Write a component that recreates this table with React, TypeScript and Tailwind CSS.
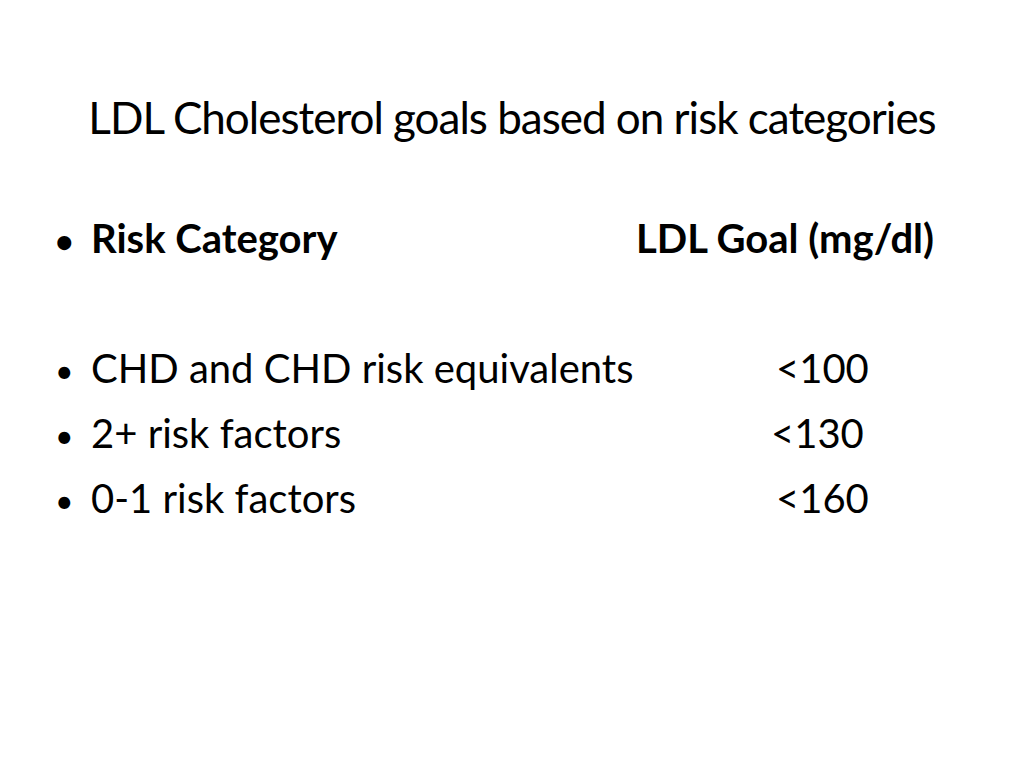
const rows = [
  { label: 'CHD and CHD risk equivalents', goal: '<100', width: 'w-[685px]' },
  { label: '2+ risk factors', goal: '<130', width: 'w-[680px]' },
  { label: '0-1 risk factors', goal: '<160', width: 'w-[685px]' },
];

export default function App() {
  return (
    <div className="w-[1024px] h-[768px] bg-white text-black font-['Lato','Liberation_Sans',sans-serif] overflow-hidden">
      {/* Slide title */}
      <h1 className="pt-[89px] text-center text-[44px] leading-[56px] tracking-[-1px]">
        LDL Cholesterol goals based on risk categories
      </h1>

      {/* Bullet list */}
      <ul className="mt-[61px] pl-[55px] text-[40px] leading-[65px]">
        <li className="flex items-baseline h-[65px] font-bold">
          <span className="w-[36px] text-[32px]">•</span>
          <span className="w-[545px]">Risk Category</span>
          <span>LDL Goal (mg/dl)</span>
        </li>
        <li className="h-[65px]" />
        {rows.map((r) => (
          <li key={r.label} className="flex items-baseline h-[65px]">
            <span className="w-[36px] text-[32px]">•</span>
            <span className={r.width}>{r.label}</span>
            <span>{r.goal}</span>
          </li>
        ))}
      </ul>
    </div>
  );
}
